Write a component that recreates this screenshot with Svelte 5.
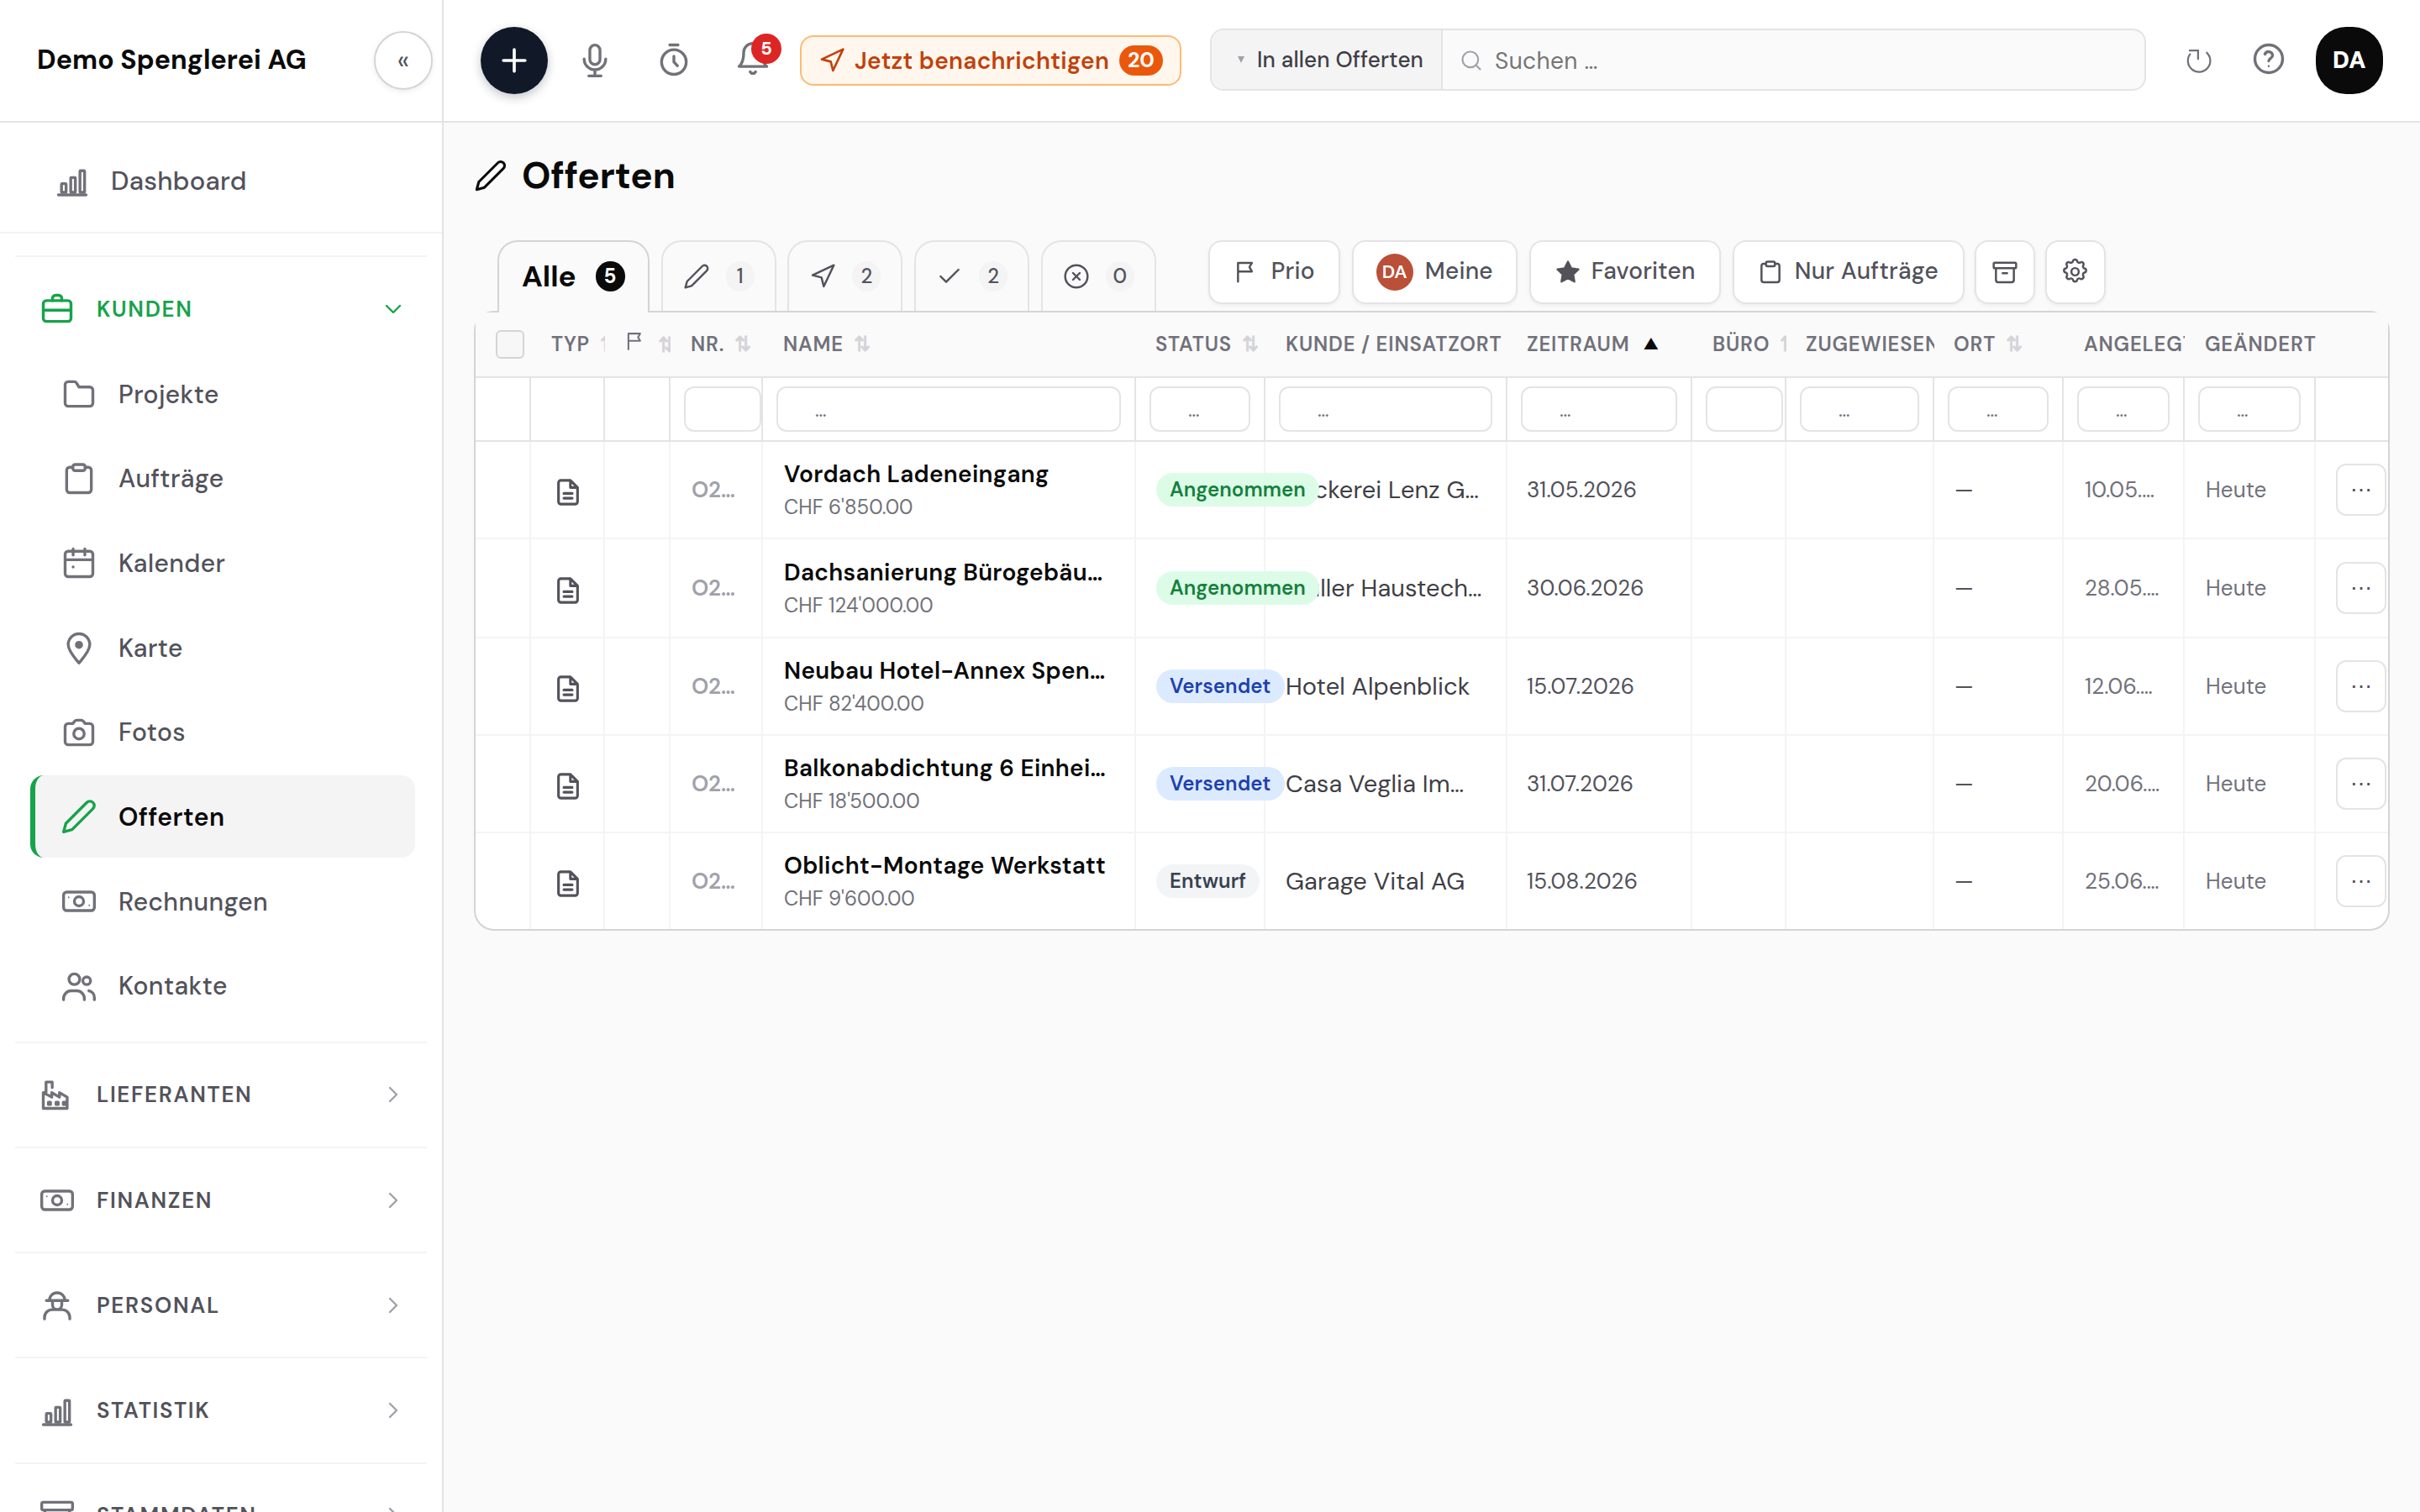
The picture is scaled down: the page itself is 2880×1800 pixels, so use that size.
<script>
    const icons = {
        chart: '<path d="M3 21.3h18"/><rect x="5" y="14" width="3" height="5.6" rx=".4"/><rect x="11" y="10" width="3" height="9.6" rx=".4"/><rect x="17" y="5.6" width="3" height="14" rx=".4"/>',
        briefcase: '<rect x="3" y="6.5" width="18" height="13.5" rx="2"/><path d="M9 6.5V5a2 2 0 0 1 2-2h2a2 2 0 0 1 2 2v1.5M3 12.7h18"/>',
        folder: '<path d="M3 18V6a2 2 0 0 1 2-2h4a1.5 1.5 0 0 1 1.2.6L12 7.5h7a2 2 0 0 1 2 2V18a2 2 0 0 1-2 2H5a2 2 0 0 1-2-2z"/>',
        clipboard: '<path d="M8 4.5H6a2 2 0 0 0-2 2V19a2 2 0 0 0 2 2h12a2 2 0 0 0 2-2V6.5a2 2 0 0 0-2-2h-2"/><rect x="8" y="2.7" width="8" height="4" rx="1.5"/>',
        calendar: '<rect x="3" y="4.5" width="18" height="16.5" rx="2"/><path d="M3 10h18M8.200 3v4M15.800 3v4M8.200 14.700h.01"/>',
        pin: '<path d="M12 22c-2-2.600-7-7.500-7-12a7 7 0 0 1 14 0c0 4.500-5 9.400-7 12z"/><circle cx="12" cy="10.200" r="1.700" fill="currentColor"/>',
        camera: '<path d="M8 6.200l1.300-1.600a1.500 1.500 0 0 1 1.200-.6h3a1.500 1.500 0 0 1 1.200.6L16 6.200h3a2 2 0 0 1 2 2V18a2 2 0 0 1-2 2H5a2 2 0 0 1-2-2V8.200a2 2 0 0 1 2-2z"/><circle cx="12" cy="12.800" r="3.400"/>',
        pen: '<path d="M17 3a2.830 2.830 0 1 1 4 4L7.500 20.500 2 22l1.500-5.500z"/>',
        money: '<rect x="2" y="6" width="20" height="12" rx="2"/><circle cx="12" cy="12" r="3"/><path stroke-width="1" d="M5.300 9.400h.01M18.700 14.600h.01"/>',
        users: '<circle cx="9" cy="7.500" r="3.500"/><circle cx="17" cy="8.500" r="2.500"/><path d="M2 20.800v-.8a5 5 0 0 1 5-5h3.500a5 5 0 0 1 5 5v.8M18.400 15a4.500 4.500 0 0 1 3.600 4.500v1.300"/>',
        factory: '<path d="M3 21V10.700h1.800V3.900h4v3.600M3 10.700l5.500 3v-2.900l5 2.900v-2.900l5 2.900V21H3z"/><path d="M6.300 17h1.400v1.500H6.300zM11.300 17h1.400v1.500h-1.400zM16 17h1.400v1.500H16z"/>',
        worker: '<path d="M7 8.800a5 5 0 0 1 10 0M5 8.900h14M9 9v2.700a3 3 0 0 0 6 0V9M3.800 20.800v-1a5 5 0 0 1 5-5h6.400a5 5 0 0 1 5 5v1"/>',
        archive: '<rect x="2" y="3.500" width="20" height="5" rx="1"/><path d="M4 8.500V19a2 2 0 0 0 2 2h12a2 2 0 0 0 2-2V8.500M10 13h4"/>',
        mic: '<rect x="8.700" y="2" width="6.600" height="12.600" rx="3.300"/><path d="M5 11a7 7 0 0 0 14 0M12 18v4M8 22h8"/>',
        timer: '<circle cx="12" cy="13" r="8"/><path d="M9.300 1.900h5.400M12 9.200V13l2.300 2.400"/>',
        bell: '<path d="M18 8A6 6 0 0 0 6 8c0 7-3 9-3 9h18s-3-2-3-9M13.730 20.500a2 2 0 0 1-3.460 0"/>',
        send: '<path d="M3 11l19-9-9 19-2-8-8-2z"/>',
        search: '<circle cx="11" cy="11" r="8"/><path d="M21 21l-4.300-4.300"/>',
        refresh: '<path d="M2.500 3.500h9v9M19.500 5a11 11 0 1 1-15.500 1.500"/>',
        help: '<circle cx="12" cy="12" r="9"/><path d="M9.500 9a2.600 2.600 0 0 1 5 .8c0 1.700-2.500 2-2.500 3.600"/><path stroke-width="1.300" d="M12 16.800h.01"/>',
        plus: '<path d="M12 5v14M5 12h14"/>',
        check: '<path d="M20 6L9 17l-5-5"/>',
        cancel: '<circle cx="12" cy="12" r="10"/><path d="M15 9l-6 6M9 9l6 6"/>',
        flag: '<path d="M7 20.500V3.700h12.400l-2.200 3.800 2.200 3.900H7"/>',
        star: '<path fill="currentColor" d="M12 2l3.090 6.260L22 9.270l-5 4.870 1.180 6.880L12 17.770l-6.180 3.250L7 14.140 2 9.270l6.910-1.010z"/>',
        gear: '<circle cx="12" cy="12" r="3"/><path d="M10.300 3.300c.4-1.700 3-1.700 3.400 0a1.700 1.700 0 0 0 2.600 1.100c1.500-1 3.300.8 2.400 2.400a1.700 1.700 0 0 0 1 2.500c1.800.4 1.800 3 0 3.400a1.700 1.700 0 0 0-1 2.600c.9 1.500-.9 3.300-2.400 2.400a1.700 1.700 0 0 0-2.600 1c-.4 1.800-3 1.800-3.400 0a1.700 1.700 0 0 0-2.600-1c-1.500.9-3.300-.9-2.400-2.400a1.700 1.700 0 0 0-1-2.600c-1.800-.4-1.800-3 0-3.400a1.700 1.700 0 0 0 1-2.500c-.9-1.600.9-3.400 2.400-2.400a1.700 1.700 0 0 0 2.600-1.100z"/>',
        doc: '<path d="M14 2H6a2 2 0 0 0-2 2v16a2 2 0 0 0 2 2h12a2 2 0 0 0 2-2V8zM14 2v6h6M8.500 13h7M8.500 17h7"/>',
        down: '<path d="M6 9l6 6 6-6"/>',
        right: '<path d="M9 6l6 6-6 6"/>'
    };

    const customerItems = [
        { icon: "folder", label: "Projekte" },
        { icon: "clipboard", label: "Aufträge" },
        { icon: "calendar", label: "Kalender" },
        { icon: "pin", label: "Karte" },
        { icon: "camera", label: "Fotos" },
        { icon: "pen", label: "Offerten" },
        { icon: "money", label: "Rechnungen" },
        { icon: "users", label: "Kontakte" }
    ];

    const sections = [
        { icon: "factory", label: "Lieferanten" },
        { icon: "money", label: "Finanzen" },
        { icon: "worker", label: "Personal" },
        { icon: "chart", label: "Statistik" },
        { icon: "archive", label: "Stammdaten" }
    ];

    const tabs = [
        { icon: "pen", count: 1 },
        { icon: "send", count: 2 },
        { icon: "check", count: 2 },
        { icon: "cancel", count: 0 }
    ];

    const columns = [
        { key: "check", width: 66 },
        { key: "type", width: 88, label: "Typ", sort: true },
        { key: "flag", width: 78, sort: true },
        { key: "nr", width: 110, label: "Nr.", sort: true, filter: true },
        { key: "name", width: 444, label: "Name", sort: true, filter: true },
        { key: "status", width: 154, label: "Status", sort: true, filter: true },
        { key: "customer", width: 288, label: "Kunde / Einsatzort", filter: true },
        { key: "period", width: 220, label: "Zeitraum", filter: true },
        { key: "office", width: 112, label: "Büro", sort: true, filter: true },
        { key: "assigned", width: 176, label: "Zugewiesen", filter: true },
        { key: "place", width: 154, label: "Ort", sort: true, filter: true },
        { key: "created", width: 144, label: "Angelegt", filter: true },
        { key: "changed", width: 156, label: "Geändert", filter: true },
        { key: "menu", width: 86 }
    ];

    const offers = [
        { name: "Vordach Ladeneingang", sum: "CHF 6'850.00", status: "Angenommen", customer: "Bäckerei Lenz G…", date: "31.05.2026", created: "10.05.…" },
        { name: "Dachsanierung Bürogebäu…", sum: "CHF 124'000.00", status: "Angenommen", customer: "Müller Haustech…", date: "30.06.2026", created: "28.05.…" },
        { name: "Neubau Hotel-Annex Spen…", sum: "CHF 82'400.00", status: "Versendet", customer: "Hotel Alpenblick", date: "15.07.2026", created: "12.06.…" },
        { name: "Balkonabdichtung 6 Einhei…", sum: "CHF 18'500.00", status: "Versendet", customer: "Casa Veglia Im…", date: "31.07.2026", created: "20.06.…" },
        { name: "Oblicht-Montage Werkstatt", sum: "CHF 9'600.00", status: "Entwurf", customer: "Garage Vital AG", date: "15.08.2026", created: "25.06.…" }
    ];

    let activeItem = $state("Offerten");
</script>

{#snippet icon(name, cls = "")}
    <svg class="icon {cls}" viewBox="0 0 24 24" aria-hidden="true">{@html icons[name]}</svg>
{/snippet}

<div class="app">
    <aside class="sidebar">
        <div class="brand">
            <span class="brand-name">Demo Spenglerei AG</span>
            <button class="collapse">«</button>
        </div>

        <a class="dashboard" href="#dashboard">
            {@render icon("chart")}
            <span>Dashboard</span>
        </a>

        <nav>
            <div class="section open">
                {@render icon("briefcase")}
                <span class="section-label">Kunden</span>
                {@render icon("down", "chevron")}
            </div>
            <div class="items">
                {#each customerItems as item}
                    <button class="item" class:active={activeItem === item.label} onclick={() => activeItem = item.label}>
                        {@render icon(item.icon)}
                        <span>{item.label}</span>
                    </button>
                {/each}
            </div>
            {#each sections as section}
                <div class="section">
                    {@render icon(section.icon)}
                    <span class="section-label">{section.label}</span>
                    {@render icon("right", "chevron")}
                </div>
            {/each}
        </nav>
    </aside>

    <div class="content">
        <header class="topbar">
            <button class="add">{@render icon("plus")}</button>
            <button class="tool first">{@render icon("mic")}</button>
            <button class="tool">{@render icon("timer")}</button>
            <button class="tool bell">{@render icon("bell")}<span class="bell-count">5</span></button>
            <button class="notify">
                {@render icon("send")}
                <span class="notify-label">Jetzt benachrichtigen</span>
                <span class="notify-count">20</span>
            </button>
            <div class="search">
                <div class="scope">
                    <span class="scope-arrow"></span>
                    <span class="scope-label">In allen Offerten</span>
                </div>
                <div class="query">
                    {@render icon("search")}
                    <span>Suchen …</span>
                </div>
            </div>
            <button class="tool refresh">{@render icon("refresh")}</button>
            <button class="tool help">{@render icon("help")}</button>
            <div class="avatar">DA</div>
        </header>

        <main>
            <h1>{@render icon("pen")}<span>Offerten</span></h1>

            <div class="toolbar">
                <div class="tabs">
                    <button class="tab selected"><span>Alle</span><b>5</b></button>
                    {#each tabs as tab}
                        <button class="tab">{@render icon(tab.icon)}<b>{tab.count}</b></button>
                    {/each}
                </div>
                <div class="filters">
                    <button class="filter prio">{@render icon("flag")}<span>Prio</span></button>
                    <button class="filter mine"><i>DA</i><span>Meine</span></button>
                    <button class="filter favourites">{@render icon("star")}<span>Favoriten</span></button>
                    <button class="filter orders">{@render icon("clipboard")}<span>Nur Aufträge</span></button>
                    <button class="filter square">{@render icon("archive")}</button>
                    <button class="filter square">{@render icon("gear", "gear")}</button>
                </div>
            </div>

            <div class="table-box">
                <table>
                    <colgroup>
                        {#each columns as column}
                            <col style="width: {column.width}px" />
                        {/each}
                    </colgroup>
                    <thead>
                        <tr class="labels">
                            {#each columns as column}
                                <th class={column.key}>
                                    {#if column.key === "check"}
                                        <span class="checkbox"></span>
                                    {:else}
                                        <div class="label">
                                            {#if column.key === "flag"}{@render icon("flag")}{/if}
                                            {#if column.label}<span>{column.label}</span>{/if}
                                            {#if column.sort}<span class="sort">⇅</span>{/if}
                                            {#if column.key === "period"}<span class="sorted">▲</span>{/if}
                                        </div>
                                    {/if}
                                </th>
                            {/each}
                        </tr>
                        <tr class="inputs">
                            {#each columns as column}
                                <th>
                                    {#if column.filter}
                                        <div class="input">{column.width > 112 ? "…" : ""}</div>
                                    {/if}
                                </th>
                            {/each}
                        </tr>
                    </thead>
                    <tbody>
                        {#each offers as offer}
                            <tr>
                                <td></td>
                                <td class="type">{@render icon("doc")}</td>
                                <td></td>
                                <td class="nr">O2…</td>
                                <td class="name">
                                    <div class="title">{offer.name}</div>
                                    <div class="sum">{offer.sum}</div>
                                </td>
                                <td class="status"><span class="badge {offer.status.toLowerCase()}">{offer.status}</span></td>
                                <td class="customer">{offer.customer}</td>
                                <td class="date">{offer.date}</td>
                                <td></td>
                                <td></td>
                                <td class="place">—</td>
                                <td class="muted">{offer.created}</td>
                                <td class="muted">Heute</td>
                                <td class="menu"><button>⋯</button></td>
                            </tr>
                        {/each}
                    </tbody>
                </table>
            </div>
        </main>
    </div>
</div>

<style>
    :global(body) {
        background: #fafafa;
        overflow: hidden;
    }

    .app {
        display: flex;
        width: 2880px;
        height: 1800px;
        overflow: hidden;
        font-family: "DM Sans", Inter, "Liberation Sans", sans-serif;
        color: #0a0a0a;
        background: #fafafa;
    }

    .app * {
        box-sizing: border-box;
    }

    button {
        font: inherit;
        letter-spacing: inherit;
        color: inherit;
        background: none;
        border: none;
        padding: 0;
        cursor: pointer;
    }

    span, b, td {
        white-space: nowrap;
    }

    .icon {
        width: 44px;
        height: 44px;
        flex: none;
        fill: none;
        stroke: currentColor;
        stroke-width: 1.85;
        stroke-linecap: round;
        stroke-linejoin: round;
    }

    /* Sidebar */
    .sidebar {
        flex: none;
        width: 528px;
        height: 1800px;
        overflow: hidden;
        background: #fff;
        border-right: 2px solid #e4e4e7;
    }

    .brand {
        display: flex;
        align-items: center;
        justify-content: space-between;
        height: 146px;
        padding: 0 11px 0 44px;
        border-bottom: 2px solid #e4e4e7;
    }

    .brand-name {
        margin-bottom: 2px;
        font-size: 32px;
        font-weight: 700;
        letter-spacing: 0.05px;
    }

    .collapse {
        width: 70px;
        height: 70px;
        border: 2px solid #d4d4d8;
        border-radius: 50%;
        font-size: 32px;
        color: #52525b;
        box-shadow: 0 2px 6px rgba(0, 0, 0, 0.08);
    }

    .dashboard {
        display: flex;
        align-items: center;
        gap: 24px;
        height: 132px;
        padding: 8px 0 0 64px;
        border-bottom: 2px solid #f4f4f5;
        color: #52525b;
        font-size: 31px;
        font-weight: 500;
        letter-spacing: 0.25px;
        text-decoration: none;
    }

    .sidebar .icon {
        color: #71717a;
    }

    nav {
        margin: 26px 18px 0;
    }

    .section {
        display: flex;
        align-items: center;
        height: 125.200px;
        padding: 0 24px 0 28px;
        border-top: 2px solid #f4f4f5;
        color: #52525b;
    }

    .section-label {
        flex: 1;
        margin-left: 25px;
        font-size: 26px;
        font-weight: 600;
        letter-spacing: 1.650px;
        text-transform: uppercase;
    }

    .sidebar .chevron {
        width: 32px;
        height: 32px;
        color: #a1a1aa;
        stroke-width: 1.800;
    }

    .section.open,
    .section.open .icon {
        color: #16a34a;
    }

    .section.open {
        height: 116px;
        padding-top: 10px;
    }

    .items {
        display: flex;
        flex-direction: column;
        gap: 2.700px;
        padding: 0 14px 17px 18px;
    }

    .item {
        display: flex;
        align-items: center;
        gap: 25px;
        height: 98px;
        padding-left: 30px;
        border-left: 6px solid transparent;
        border-radius: 16px;
        color: #52525b;
        font-size: 30px;
        font-weight: 500;
        letter-spacing: 0.400px;
    }

    .item.active {
        background: #f4f4f5;
        border-left-color: #16a34a;
        color: #0a0a0a;
        font-weight: 600;
        letter-spacing: 0.550px;
    }

    .item.active .icon {
        color: #16a34a;
    }

    /* Top bar */
    .content {
        flex: 1;
        min-width: 0;
    }

    .topbar {
        display: flex;
        align-items: center;
        height: 146px;
        padding: 0 44px;
        background: #fff;
        border-bottom: 2px solid #e4e4e7;
    }

    .add {
        display: grid;
        place-items: center;
        width: 80px;
        height: 80px;
        border-radius: 50%;
        background: #111827;
        color: #fff;
        box-shadow: 0 4px 12px rgba(17, 24, 39, 0.25);
    }

    .add .icon {
        stroke-width: 2;
    }

    .tool {
        position: relative;
        display: grid;
        place-items: center;
        width: 80px;
        height: 80px;
        margin-left: 14px;
        color: #71717a;
    }

    .tool.first {
        margin-left: 16px;
    }

    .bell .icon {
        margin-bottom: 4px;
    }

    .bell-count {
        position: absolute;
        top: 8px;
        left: 38px;
        width: 36px;
        height: 36px;
        border-radius: 18px;
        background: #dc2626;
        color: #fff;
        font-size: 22px;
        font-weight: 700;
        line-height: 36px;
        text-align: center;
    }

    .notify {
        display: flex;
        align-items: center;
        width: 454px;
        height: 60px;
        margin-left: 16px;
        padding: 0 20px;
        border: 2px solid #fdba74;
        border-radius: 16px;
        background: #fff7ed;
        color: #c2410c;
    }

    .notify .icon {
        width: 32px;
        height: 32px;
        stroke-width: 2;
    }

    .notify-label {
        width: 306px;
        margin-left: 11px;
        font-size: 28px;
        font-weight: 600;
        letter-spacing: 0.300px;
        text-align: left;
    }

    .notify-count {
        width: 52px;
        margin-left: 9px;
        border-radius: 18px;
        background: #ea580c;
        color: #fff;
        font-size: 25px;
        font-weight: 700;
        line-height: 36px;
        text-align: center;
    }

    .search {
        display: flex;
        flex: 1;
        height: 74px;
        margin: 0 8px 2px 34px;
        border: 2px solid #e4e4e7;
        border-radius: 16px;
        overflow: hidden;
        background: #fafafa;
    }

    .scope {
        display: flex;
        align-items: center;
        width: 275px;
        padding-left: 31px;
        border-right: 2px solid #e4e4e7;
        background: #f4f4f5;
        color: #3f3f46;
        font-size: 26px;
        font-weight: 500;
        letter-spacing: 0.150px;
    }

    .scope-arrow {
        border: 4px solid transparent;
        border-top: 8px solid #a1a1aa;
        border-bottom: none;
        margin-right: 15px;
    }

    .query {
        display: flex;
        align-items: center;
        gap: 14px;
        padding: 2px 0 0 20px;
        color: #757575;
        font-size: 28px;
        letter-spacing: 0.400px;
    }

    .query .icon {
        width: 28px;
        height: 28px;
        color: #a1a1aa;
    }

    .refresh .icon {
        width: 29px;
        height: 29px;
        margin-bottom: 3px;
        overflow: visible;
        stroke-linecap: butt;
        stroke-linejoin: miter;
    }

    .help {
        margin-left: 4px;
    }

    .help .icon {
        margin-bottom: 4px;
    }

    .avatar {
        width: 80px;
        height: 80px;
        margin-left: 16px;
        border-radius: 36px;
        background: #0a0a0a;
        color: #fff;
        font-size: 28px;
        font-weight: 900;
        letter-spacing: 0.500px;
        line-height: 80px;
        text-align: center;
    }

    /* Page */
    main {
        padding: 0 36px;
    }

    h1 {
        display: flex;
        align-items: center;
        gap: 17px;
        height: 126px;
        margin: 0 0 14px;
        font-size: 44px;
        font-weight: 700;
    }

    h1 .icon {
        width: 40px;
        height: 40px;
    }

    .toolbar {
        display: flex;
        align-items: flex-start;
        gap: 62px;
        height: 84px;
        padding-left: 28px;
    }

    .tabs {
        display: flex;
        gap: 13.700px;
    }

    .tab {
        display: flex;
        align-items: center;
        gap: 19px;
        width: 137px;
        height: 84px;
        padding: 0 24px;
        border: 2px solid #e4e4e7;
        border-bottom: none;
        border-radius: 24px 24px 0 0;
        color: #52525b;
    }

    .tab .icon {
        width: 32px;
        height: 32px;
    }

    .tab b {
        width: 35px;
        border-radius: 18px;
        background: #f4f4f5;
        font-size: 24px;
        font-weight: 500;
        line-height: 36px;
        text-align: center;
    }

    .tab.selected {
        position: relative;
        z-index: 1;
        width: 181px;
        height: 86px;
        padding: 0 0 3px 27px;
        gap: 23px;
        border-color: #d4d4d8;
        background: #fafafa;
        color: #0a0a0a;
        font-size: 35px;
        font-weight: 700;
    }

    .tab.selected b {
        background: #0a0a0a;
        color: #fff;
        font-weight: 700;
    }

    .filters {
        display: flex;
        gap: 14px;
    }

    .filter {
        display: flex;
        align-items: center;
        height: 76px;
        padding-bottom: 1px;
        border: 2px solid #e4e4e7;
        border-radius: 16px;
        background: #fff;
        color: #52525b;
        font-size: 28px;
        font-weight: 500;
        letter-spacing: 0.250px;
        box-shadow: 0 2px 4px rgba(0, 0, 0, 0.05);
    }

    .filter span {
        margin-bottom: 2px;
    }

    .filter .icon {
        width: 32px;
        height: 32px;
    }

    .filter i {
        width: 44px;
        height: 44px;
        border-radius: 50%;
        background: #b95037;
        color: #fff;
        font-size: 22px;
        font-style: normal;
        font-weight: 600;
        line-height: 44px;
        text-align: center;
    }

    .prio {
        width: 157px;
        padding-left: 24px;
        gap: 17px;
    }

    .mine {
        width: 197px;
        padding-left: 27px;
        gap: 14px;
    }

    .favourites {
        width: 228px;
        padding-left: 29px;
        gap: 13px;
    }

    .filter.favourites .icon {
        width: 30px;
        height: 30px;
    }

    .orders {
        width: 276px;
        padding-left: 27px;
        gap: 13px;
    }

    .square {
        width: 72px;
        justify-content: center;
    }

    .filter .icon.gear {
        width: 35px;
        height: 35px;
        stroke-width: 1.700;
    }

    .orders + .square,
    .square + .square {
        margin-left: -2px;
    }

    /* Table: the square head sits on top of the rounded frame */
    .table-box {
        width: 2280px;
        height: 738px;
        border: 2px solid #d4d4d8;
        border-radius: 24px;
        background: #fff;
    }

    table {
        width: 2276px;
        table-layout: fixed;
        border-spacing: 0;
    }

    th, td {
        padding: 0;
        text-align: left;
        font-weight: inherit;
        border-right: 2px solid #f4f4f5;
        border-bottom: 2px solid #f4f4f5;
    }

    th:last-child,
    td:last-child {
        border-right: none;
    }

    .labels th {
        height: 78px;
        padding: 0 0 1px 24px;
        overflow: hidden;
        background: #fafafa;
        border-right: none;
        border-bottom-color: #e4e4e7;
        color: #71717a;
        font-size: 24px;
        font-weight: 600;
        letter-spacing: 0.820px;
    }

    .labels .status,
    .labels .period,
    .labels .assigned,
    .labels .place {
        padding-left: 23px;
    }

    .label {
        display: flex;
        align-items: center;
        gap: 12px;
        overflow: hidden;
        text-transform: uppercase;
    }

    .label .icon {
        width: 27px;
        height: 27px;
        margin: -6px 4px 0 -4px;
    }

    .labels .flag {
        padding-left: 20px;
    }

    .flag .label {
        padding-left: 4px;
    }

    .flag .sort {
        padding-top: 2px;
    }

    .checkbox {
        display: block;
        width: 34px;
        height: 34px;
        border: 2px solid #d4d4d8;
        border-radius: 6px;
        background: #f7f7f7;
    }

    .sort {
        color: #d4d4d8;
        font-size: 24px;
        letter-spacing: 0;
    }

    .sorted {
        margin-left: 4px;
        color: #0a0a0a;
        font-size: 18px;
    }

    .inputs th {
        height: 76px;
        padding: 0 16px;
        border-color: #e4e4e7;
    }

    .input {
        min-width: 92px;
        height: 54px;
        padding-left: 44px;
        border: 2px solid #e4e4e7;
        border-radius: 12px;
        background: #fff;
        color: #71717a;
        font-size: 24px;
        line-height: 52px;
    }

    tbody tr {
        height: 116px;
    }

    tbody tr:nth-child(2) {
        height: 118px;
    }

    tbody tr:last-child {
        height: 114px;
    }

    tbody tr:last-child td {
        border-bottom: none;
    }

    td {
        padding-left: 24px;
        color: #52525b;
        font-size: 26px;
    }

    .type .icon {
        display: block;
        width: 34px;
        height: 34px;
        margin: 6px 0 0 3px;
        stroke-width: 2.200;
    }

    td.nr {
        padding-left: 25px;
        color: #a1a1aa;
        font-weight: 600;
    }

    td.name {
        padding-left: 25px;
    }

    .title {
        padding-top: 1px;
        color: #0a0a0a;
        font-size: 28px;
        font-weight: 600;
        letter-spacing: 0.300px;
        line-height: 40px;
    }

    .sum {
        color: #71717a;
        font-size: 24px;
        letter-spacing: 0.050px;
        line-height: 38px;
    }

    .badge {
        position: relative;
        z-index: 1;
        display: inline-block;
        padding: 0 16px;
        border-radius: 20px;
        font-size: 24px;
        font-weight: 600;
        letter-spacing: 0.080px;
        line-height: 40px;
    }

    .angenommen {
        background: #dcfce7;
        color: #15803d;
    }

    .versendet {
        background: #dbeafe;
        color: #1e40af;
    }

    .entwurf {
        background: #f3f4f6;
        color: #374151;
    }

    td.customer {
        color: #3f3f46;
        font-size: 29px;
        letter-spacing: 0.100px;
    }

    td.date {
        padding-left: 23px;
        letter-spacing: 0.180px;
    }

    td.muted {
        padding-left: 25px;
        color: #71717a;
        letter-spacing: 0.100px;
    }

    .menu button {
        display: grid;
        place-items: center;
        width: 60px;
        height: 62px;
        border: 2px solid #e4e4e7;
        border-radius: 12px;
        color: #52525b;
        font-size: 26px;
    }
</style>
